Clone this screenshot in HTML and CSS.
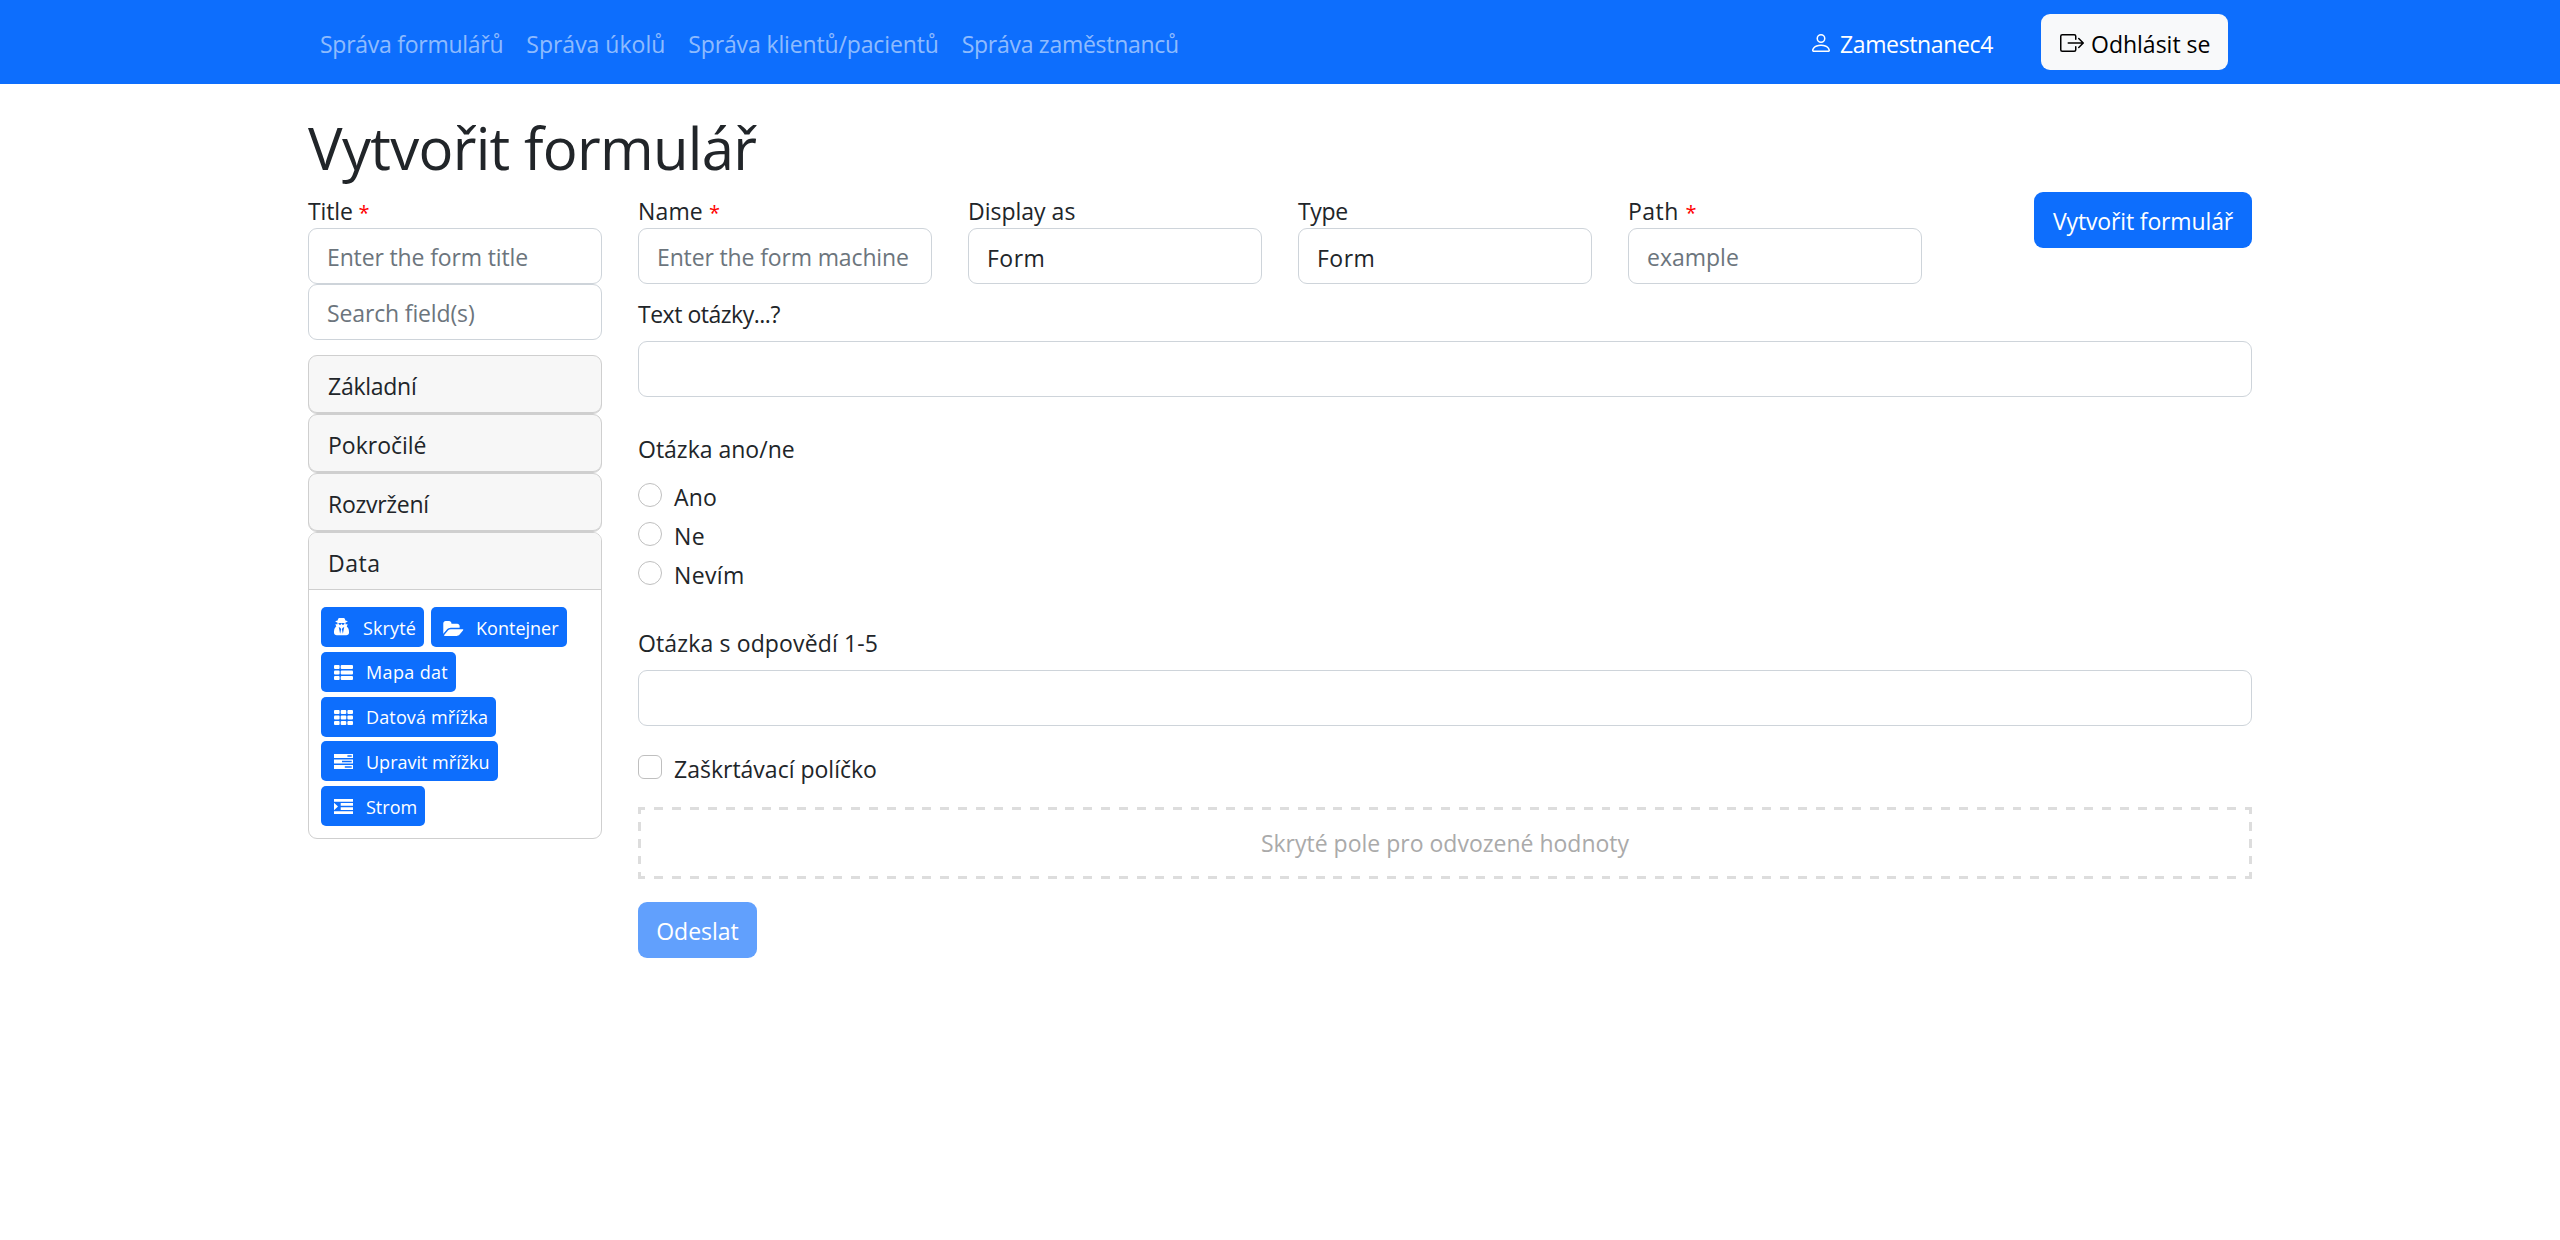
FILE: index.html
```html
<!DOCTYPE html>
<html lang="cs">
<head>
<meta charset="utf-8">
<title>Vytvořit formulář</title>
<link rel="stylesheet" href="styles.css">
</head>
<body>
<header class="navbar">
  <div class="container nav-inner">
    <nav class="nav-links">
      <a class="tight2">Správa formulářů</a>
      <a>Správa úkolů</a>
      <a class="tight">Správa klientů/pacientů</a>
      <a class="tight2">Správa zaměstnanců</a>
    </nav>
    <div class="nav-user">
      <svg class="bi" viewBox="0 0 16 16"><path d="M8 8a3 3 0 1 0 0-6 3 3 0 0 0 0 6zm2-3a2 2 0 1 1-4 0 2 2 0 0 1 4 0zm4 8c0 1-1 1-1 1H3s-1 0-1-1 1-4 6-4 6 3 6 4zm-1-.004c-.001-.246-.154-.986-.832-1.664C11.516 10.68 10.289 10 8 10c-2.29 0-3.516.68-4.168 1.332-.678.678-.83 1.418-.832 1.664h10z"/></svg>
      <span class="tight3">Zamestnanec4</span>
    </div>
    <button class="btn btn-light logout">
      <svg class="bi" viewBox="0 0 16 16"><path d="M10 12.5a.5.5 0 0 1-.5.5h-8a.5.5 0 0 1-.5-.5v-9a.5.5 0 0 1 .5-.5h8a.5.5 0 0 1 .5.5v2a.5.5 0 0 0 1 0v-2A1.5 1.5 0 0 0 9.5 2h-8A1.5 1.5 0 0 0 0 3.5v9A1.5 1.5 0 0 0 1.5 14h8a1.5 1.5 0 0 0 1.5-1.5v-2a.5.5 0 0 0-1 0v2z"/><path d="M15.854 8.354a.5.5 0 0 0 0-.708l-3-3a.5.5 0 0 0-.708.708L14.293 7.5H5.5a.5.5 0 0 0 0 1h8.793l-2.147 2.146a.5.5 0 0 0 .708.708l3-3z"/></svg>
      <span>Odhlásit se</span>
    </button>
  </div>
</header>

<main class="container">
  <h1>Vytvořit formulář</h1>

  <div class="settings">
    <div class="field"><label class="tight">Title <i>*</i></label><input class="control tight" placeholder="Enter the form title"></div>
    <div class="field"><label class="t1">Name <i>*</i></label><input class="control tight" placeholder="Enter the form machine"></div>
    <div class="field"><label>Display as</label><div class="control t3">Form</div></div>
    <div class="field"><label class="tight3">Type</label><div class="control t3">Form</div></div>
    <div class="field"><label class="t3">Path <i>*</i></label><input class="control" placeholder="example"></div>
    <button class="btn btn-primary create tight">Vytvořit formulář</button>
  </div>

  <div class="builder">
    <aside class="sidebar">
      <input class="control tight" placeholder="Search field(s)">
      <div class="accordion">
        <section class="card"><div class="card-header tight2">Základní</div></section>
        <section class="card"><div class="card-header">Pokročilé</div></section>
        <section class="card"><div class="card-header tight2">Rozvržení</div></section>
        <section class="card open">
          <div class="card-header t3">Data</div>
          <div class="card-body">
            <div class="tool t1"><svg class="i-secret" viewBox="0 128 1408 1536"><path d="M576 1536l96-448-96-128-128-64zm256 0l128-640-128 64-96 128zm160-1010q-2-4-4-6-10-8-96-8-70 0-167 19-7 2-21 2t-21-2q-97-19-167-19-86 0-96 8-2 2-4 6 2 18 4 27 2 3 7.5 6.5t7.5 10.5q2 4 7.5 20.5t7 20.5 7.5 17 8.5 17 9 14 12 13.5 14 9.5 17.5 8 20.5 4 24.5 2q36 0 59-12.5t32.5-30 14.5-34.5 11.5-29.5 17.5-12.5h12q11 0 17.5 12.5t11.5 29.5 14.5 34.5 32.5 30 59 12.5q13 0 24.5-2t20.5-4 17.5-8 14-9.5 12-13.5 9-14 8.5-17 7.5-17 7-20.5 7.5-20.5q2-7 7.5-10.5t7.5-6.5q2-9 4-27zm416 879q0 121-73 190t-194 69h-874q-121 0-194-69t-73-190q0-61 4.5-118t19-125.5 37.5-123.5 63.5-103.5 93.5-74.5l-90-220h214q-22-64-22-128 0-12 2-32-194-40-194-96 0-57 210-99 17-62 51.5-134t70.5-114q32-37 76-37 30 0 84 31t84 31 84-31 84-31q44 0 76 37 36 42 70.5 114t51.5 134q210 42 210 99 0 56-194 96 7 81-20 160h214l-82 225q63 33 107.5 96.5t65.5 143.5 29 151.5 8 148.5z"/></svg><span>Skryté</span></div>
            <div class="tool"><svg class="i-folder" viewBox="0 128 1920 1408"><path d="M1879 952q0 31-31 66l-336 396q-43 51-120.5 86.5t-143.5 35.5h-1088q-34 0-60.5-13t-26.5-43q0-31 31-66l336-396q43-51 120.5-86.5t143.5-35.5h1088q34 0 60.5 13t26.5 43zm-343-344v160h-832q-94 0-197 47.5t-164 119.5l-337 396-5 6q0-4-.5-12.5t-.5-12.5v-960q0-92 66-158t158-66h320q92 0 158 66t66 158v32h544q92 0 158 66t66 158z"/></svg><span>Kontejner</span></div>
            <div class="tool t2"><svg class="i-grid" viewBox="0 0 19 15"><rect width="5.6" height="4" rx="1"/><rect x="6.700" width="12.300" height="4" rx="1"/><rect y="5.500" width="5.600" height="4" rx="1"/><rect x="6.700" y="5.500" width="12.300" height="4" rx="1"/><rect y="11" width="5.600" height="4" rx="1"/><rect x="6.700" y="11" width="12.300" height="4" rx="1"/></svg><span>Mapa dat</span></div>
            <div class="tool t1"><svg class="i-grid" viewBox="0 0 19 15"><rect width="5.600" height="4" rx="1"/><rect x="6.700" width="5.600" height="4" rx="1"/><rect x="13.400" width="5.600" height="4" rx="1"/><rect y="5.500" width="5.600" height="4" rx="1"/><rect x="6.700" y="5.500" width="5.600" height="4" rx="1"/><rect x="13.400" y="5.500" width="5.600" height="4" rx="1"/><rect y="11" width="5.600" height="4" rx="1"/><rect x="6.700" y="11" width="5.600" height="4" rx="1"/><rect x="13.400" y="11" width="5.600" height="4" rx="1"/></svg><span>Datová mřížka</span></div>
            <div class="tool"><svg class="i-grid" viewBox="0 0 19 15"><path fill-rule="evenodd" d="M0 0h19v4H0zM13.400 1.300v1.400h4.300V1.300zM0 5.500h19v4H0zM8 6.800v1.400h9.700V6.800zM0 11h19v4H0zM10.800 12.300v1.400h6.900v-1.400z"/></svg><span>Upravit mřížku</span></div>
            <div class="tool"><svg class="i-grid" viewBox="0 0 19 15"><path d="M0 0h19v2.700H0zM6.700 4.100H19v2.700H6.700zM6.700 8.200H19v2.700H6.700zM0 12.300h19V15H0zM0 3.800l4 3.700-4 3.700z"/></svg><span>Strom</span></div>
          </div>
        </section>
      </div>
    </aside>

    <section class="preview">
      <div class="question">
        <div class="caption tight4">Text otázky...?</div>
        <div class="control"></div>
      </div>
      <div class="question radios">
        <div class="caption">Otázka ano/ne</div>
        <div class="check t1"><span class="box round"></span>Ano</div>
        <div class="check t3"><span class="box round"></span>Ne</div>
        <div class="check t2"><span class="box round"></span>Nevím</div>
      </div>
      <div class="question">
        <div class="caption t1">Otázka s odpovědí 1-5</div>
        <div class="control"></div>
      </div>
      <div class="check single"><span class="box"></span>Zaškrtávací políčko</div>
      <div class="hidden-field">Skryté pole pro odvozené hodnoty</div>
      <button class="btn btn-primary submit">Odeslat</button>
    </section>
  </div>
</main>
</body>
</html>
```
FILE: styles.css
```css
* { box-sizing: border-box; }

body {
  margin: 0;
  background: #fff;
  color: #212529;
  font: 23px/36px "Open Sans", "Noto Sans", sans-serif;
}

/* tracking steps */
.tight { letter-spacing: -.14px; }
.tight2 { letter-spacing: -.27px; }
.tight3 { letter-spacing: -.36px; }
.tight4 { letter-spacing: -.48px; }
.t1 { letter-spacing: .14px; }
.t2 { letter-spacing: .35px; }
.t3 { letter-spacing: .5px; }

.container { width: 1980px; margin: 0 auto; padding: 0 18px; }

.navbar { height: 84px; background: #0d6efd; color: #fff; }
.nav-inner { display: flex; align-items: center; height: 84px; }
.nav-links { display: flex; gap: 24px; padding: 4px 0 0 12px; margin-right: auto; }
.nav-links a { color: rgba(255, 255, 255, .55); white-space: nowrap; }
.nav-links a + a { margin-left: -1px; }
.nav-user { display: flex; align-items: center; gap: 7px; }
.nav-user span { padding-top: 3px; }
.bi { width: 24px; height: 24px; fill: currentColor; flex: none; margin-top: 2px; }

.btn {
  height: 56px;
  border: 0;
  border-radius: 9px;
  padding: 2px 18px 0;
  font: inherit;
  line-height: 36px;
  white-space: nowrap;
}
.btn-light { background: #f8f9fa; color: #000; }
.btn-primary { background: #0d6efd; color: #fff; }
.logout { display: flex; align-items: center; gap: 7px; width: 187px; margin: 0 24px 0 48px; padding: 0 0 0 19px; }
.logout span { padding-top: 3px; }

h1 { height: 72px; margin: 28px 0 8px; font-size: 58px; font-weight: 400; line-height: 71px; letter-spacing: -.7px; }

.settings { display: grid; grid-template-columns: repeat(6, 294px); column-gap: 36px; }
.field label { display: block; height: 36px; line-height: 39px; }
.field i { color: red; font-style: normal; font-size: 20px; line-height: 20px; }
.create { justify-self: end; width: 218px; padding: 2px 0 0; }

.control {
  display: block;
  width: 100%;
  height: 56px;
  border: 1px solid #ced4da;
  border-radius: 9px;
  padding: 10px 17px 8px 18px;
  background: #fff;
  color: #212529;
  font: inherit;
}
div.control { padding-top: 11px; }
input.control::placeholder { color: #6c757d; opacity: 1; }

.builder { display: grid; grid-template-columns: 294px 1fr; column-gap: 36px; }

.accordion { margin-top: 15px; }
.card { height: 59px; border: 1px solid #cfcfcf; border-radius: 9px; background: #f7f7f7; overflow: hidden; box-shadow: inset 0 -1px #cfcfcf; }
.card-header { height: 58px; padding: 12px 18px 0 19px; }
.card.open { height: 307px; background: #fff; box-shadow: none; }
.card.open .card-header { height: 57px; background: #f7f7f7; border-bottom: 1px solid #cfcfcf; }
.card-body { display: flex; flex-wrap: wrap; align-content: flex-start; gap: 4.75px 7px; padding: 17px 12px 0; }
.tool {
  display: flex;
  align-items: center;
  height: 40px;
  border-radius: 5px;
  padding: 0 8px 0 13px;
  background: #0d6efd;
  color: #fff;
  font-size: 18px;
}
.tool span { padding-top: 1px; }
.tool svg { fill: #fff; flex: none; }
.i-secret { width: 15px; height: 18px; margin-right: 14px; }
.i-folder { width: 21px; height: 15px; margin: 2px 12px 0 -1px; }
.i-grid { width: 19px; height: 15px; margin: 1px 13px 0 0; }

.preview { display: flex; flex-direction: column; align-items: stretch; padding-top: 11px; }
.caption { height: 46px; line-height: 39px; }
.question { margin-bottom: 33px; }
.check { display: flex; align-items: flex-start; gap: 12px; height: 39px; line-height: 38px; }
.box { width: 24px; height: 24px; margin-top: 5px; border: 1px solid #bfbfbf; border-radius: 6px; flex: none; }
.round { border-radius: 50%; }
.radios { margin-bottom: 29px; }
.radios .caption { height: 48px; }
.single { margin-top: -9px; margin-bottom: 18px; }

/* dashed outline with evenly spaced 9px strokes */
.hidden-field {
  --across: repeating-linear-gradient(90deg, #ddd 0 7.5px, transparent 7.5px 16.4px, #ddd 16.4px 17.87px);
  --down: repeating-linear-gradient(#ddd 0 7.2px, transparent 7.2px 15.2px, #ddd 15.2px 16.7px);
  height: 72px;
  padding-top: 18px;
  background:
    var(--across) top / 100% 3px no-repeat,
    var(--across) bottom / 100% 3px no-repeat,
    var(--down) left / 3px 100% no-repeat,
    var(--down) right / 3px 100% no-repeat;
  color: #aaa;
  text-align: center;
}
.submit { align-self: flex-start; width: 119px; margin-top: 23px; padding: 2px 0 0; opacity: .65; }
```
